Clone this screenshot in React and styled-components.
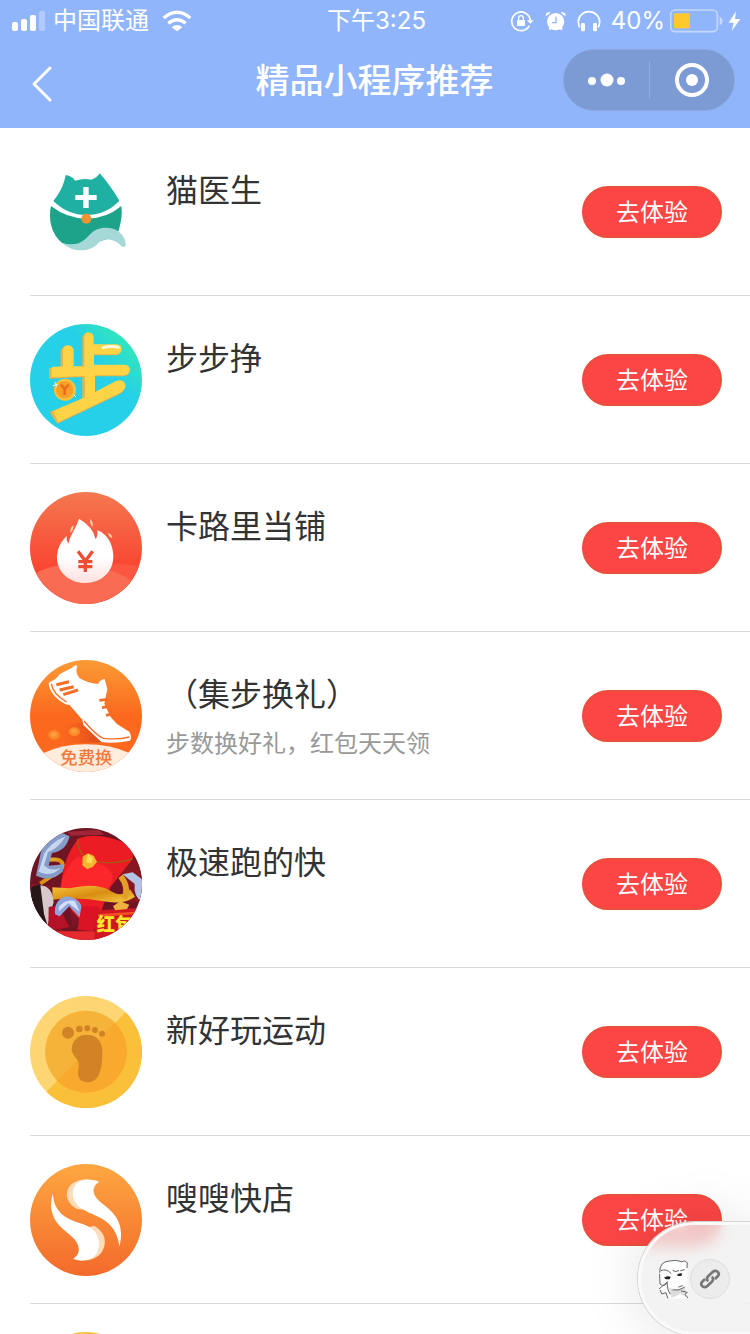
import styled, { createGlobalStyle } from "styled-components"

const GlobalStyle = createGlobalStyle`
  * {
    box-sizing: border-box;
  }
  body {
    margin: 0;
    background: #fff;
    color: #333;
    font-family: Inter, "Noto Sans CJK SC", sans-serif;
  }
  button {
    font-family: inherit;
    cursor: pointer;
  }
`

const SignalIcon = () => (
  <svg width="34" height="22" viewBox="36 27 102 66" fill="#fff" aria-hidden="true">
    <rect x="36" y="63" width="18" height="27" rx="6" />
    <rect x="63" y="54" width="18" height="36" rx="6" />
    <rect x="90" y="42" width="18" height="48" rx="6" />
    <rect x="117" y="30" width="18" height="60" rx="6" opacity="0.3" />
  </svg>
)

const WifiIcon = () => (
  <svg width="30" height="22" viewBox="486 27 90 66" aria-hidden="true">
    <g fill="none" stroke="#fff" strokeWidth="10">
      <path d="M491 51Q531 17 571 51" />
      <path d="M505 67Q531 45 557 67" />
    </g>
    <path d="M515 79Q531 65 547 79L531 91Z" fill="#fff" />
  </svg>
)

const RotationLockIcon = () => (
  <svg width="24" height="22" viewBox="405 27 72 66" aria-hidden="true">
    <path d="M463 74A28 28 0 1 1 466 58" fill="none" stroke="#fff" strokeWidth="5" />
    <path d="M456 58H476L466 68Z" fill="#fff" />
    <rect x="426" y="57" width="24" height="18" rx="2" fill="#fff" />
    <path d="M431 58V51A7 7 0 0 1 445 51V58" fill="none" stroke="#fff" strokeWidth="4" />
  </svg>
)

const AlarmIcon = () => (
  <svg width="21" height="22" viewBox="513 27 63 66" aria-hidden="true">
    <circle cx="545" cy="62" r="26" fill="#fff" />
    <path d="M516 46C513 36 521 31 530 35ZM574 46C577 36 569 31 560 35ZM524 82L531 77L535 83L527 88ZM566 82L559 77L555 83L563 88Z" fill="#fff" />
    <path d="M546 47V65H534" fill="none" stroke="#91b5fb" strokeWidth="4" />
  </svg>
)

const HeadphonesIcon = () => (
  <svg width="24" height="22" viewBox="606 27 72 66" aria-hidden="true">
    <path d="M614 79Q610 70 610 62A32 30 0 0 1 674 62Q674 70 670 79" fill="none" stroke="#fff" strokeWidth="5" />
    <rect x="618" y="66" width="12" height="25" rx="4" fill="#fff" />
    <rect x="654" y="66" width="12" height="25" rx="4" fill="#fff" />
  </svg>
)

const BatteryIcon = () => (
  <svg width="54" height="24" viewBox="885 26 162 72" aria-hidden="true">
    <rect x="887" y="29" width="140" height="65" rx="14" fill="none" stroke="#c4d7fd" strokeWidth="5" />
    <rect x="897" y="39" width="48" height="45" fill="#ffc92b" />
    <path d="M1034 49Q1043 53 1043 62T1034 74Z" fill="#c4d7fd" />
  </svg>
)

const BoltIcon = () => (
  <svg width="13" height="22" viewBox="1059 27 39 66" aria-hidden="true">
    <path d="M1083 31L1061 65H1076L1070 90L1096 54H1080Z" fill="#fff" />
  </svg>
)

const BackIcon = () => (
  <svg width="24" height="40" viewBox="0 0 24 40" aria-hidden="true">
    <path d="M20 4L4 20L20 36" fill="none" stroke="#fff" strokeWidth="3" strokeLinecap="round" strokeLinejoin="round" />
  </svg>
)

const MoreIcon = () => (
  <svg width="38" height="14" viewBox="0 0 38 14" fill="#fff" aria-hidden="true">
    <circle cx="5" cy="8" r="4" />
    <circle cx="20" cy="7" r="6.5" />
    <circle cx="34" cy="8" r="4" />
  </svg>
)

const CloseIcon = () => (
  <svg width="34" height="34" viewBox="0 0 34 34" aria-hidden="true">
    <circle cx="17" cy="17" r="15" fill="none" stroke="#fff" strokeWidth="4" />
    <circle cx="17" cy="17" r="6" fill="#fff" />
  </svg>
)

const CatLogo = () => (
  <Logo viewBox="30 18 336 336">
    <path d="M93 168Q142 206 200 206Q259 206 304 168Q309 197 296 242Q256 280 210 276Q165 296 126 279C94 252 84 207 93 168Z" fill="#1da389" />
    <path d="M126 278C166 290 188 277 206 257C226 233 254 229 280 236C305 244 319 270 317 286C314 294 305 292 301 285C282 265 249 263 233 281C214 303 164 313 126 278Z" fill="#a5d8d6" />
    <path d="M137 75Q157 78 165 92Q190 84 214 89Q231 84 239 70C261 95 280 121 298 152Q259 194 200 195Q143 195 100 153C119 130 132 104 137 75Z" fill="#1fb0a2" />
    <path d="M190 111H206V135H230V150H206V174H190V150H166V135H190Z" fill="#fff" />
    <circle cx="199" cy="206" r="15" fill="#f19330" />
  </Logo>
)

const StepsLogo = () => (
  <Logo viewBox="30 27 336 336">
    <defs>
      <linearGradient id="steps" x1="0.35" y1="0.65" x2="0.95" y2="0.1">
        <stop offset="0.5" stopColor="#25d0e8" />
        <stop offset="1" stopColor="#36edae" />
      </linearGradient>
    </defs>
    <circle cx="198" cy="195" r="168" fill="url(#steps)" />
    <g fill="#e9b248" transform="translate(-3 2)">
      <path d="M125 107Q128 91 144 91Q160 92 161 107V157H190V68Q191 52 206 52Q221 53 221 69V90H290Q305 91 305 104Q305 118 290 119H222V151H313Q330 152 330 166Q329 181 313 182H225V232L286 201Q306 192 315 207Q321 222 304 234L115 324L92 289L190 249V184L90 189V157L125 157Z" />
    </g>
    <path d="M129 107Q130 91 144 91Q160 92 161 107V154H193V68Q194 52 206 52Q221 53 221 69V88H290Q305 89 305 102Q305 117 290 118H222V149H313Q330 150 330 165Q329 180 313 181H225V231L286 199Q306 190 315 205Q321 220 304 232L115 322L99 288L195 247V183L95 187V156L129 154Z" fill="#fed447" />
    <path d="M249 98Q273 91 295 97" fill="none" stroke="#fff8dc" strokeWidth="9" strokeLinecap="round" />
    <circle cx="135" cy="224" r="33" fill="#fbc33d" />
    <circle cx="134" cy="224" r="26" fill="#fb9e25" />
    <path d="M123 209L134 222L146 209M134 222V240" fill="none" stroke="#e96e20" strokeWidth="8" />
    <path d="M104 200L110 216M98 212L114 208M162 240L168 246" stroke="#d5f8ff" strokeWidth="3" />
  </Logo>
)

const FlameLogo = () => (
  <Logo viewBox="30 27 336 336">
    <defs>
      <linearGradient id="flameBg" x1="0" y1="0" x2="0" y2="1">
        <stop offset="0" stopColor="#f47850" />
        <stop offset="0.7" stopColor="#fa4431" />
      </linearGradient>
      <linearGradient id="flame" x1="0" y1="0" x2="0" y2="1">
        <stop offset="0.6" stopColor="#fff" />
        <stop offset="1" stopColor="#ffe0df" />
      </linearGradient>
      <clipPath id="flameClip">
        <circle cx="198" cy="195" r="168" />
      </clipPath>
    </defs>
    <g clipPath="url(#flameClip)">
      <rect x="30" y="27" width="336" height="336" fill="url(#flameBg)" />
      <path d="M240 250Q312 234 380 255V370H240Z" fill="#fa5640" />
      <path d="M20 286Q110 226 220 250Q310 265 350 310V370H20Z" fill="#f96b52" />
    </g>
    <path d="M177 107Q198 119 211 135Q223 150 227 169Q234 159 232 142Q244 145 257 158C272 173 280 198 280 220C280 268 243 300 196 300C149 300 111 267 111 224C111 197 122 177 140 159Q138 171 145 182C153 151 169 134 177 107Z" fill="url(#flame)" />
    <path d="M160 127Q148 137 152 150Q162 139 160 127ZM211 108Q222 120 217 131Q208 122 211 108ZM264 151Q276 153 277 165Q267 163 264 151Z" fill="#ffd6ac" />
    <path d="M174 205L196 234L218 205M196 232V267M175 236H217M175 251H217" fill="none" stroke="#ed4d32" strokeWidth="10" />
  </Logo>
)

const ShoeLogo = () => (
  <Logo viewBox="30 27 336 336">
    <defs>
      <linearGradient id="shoeBg" x1="0" y1="0" x2="0" y2="1">
        <stop offset="0" stopColor="#fa9b35" />
        <stop offset="0.5" stopColor="#fc691e" />
      </linearGradient>
      <linearGradient id="shoeShade">
        <stop offset="0" stopColor="#f1571c" stopOpacity="0" />
        <stop offset="1" stopColor="#d94816" />
      </linearGradient>
      <clipPath id="shoeClip">
        <circle cx="198" cy="195" r="168" />
      </clipPath>
    </defs>
    <g clipPath="url(#shoeClip)">
      <rect x="30" y="27" width="336" height="336" fill="url(#shoeBg)" />
      <path d="M115 225L200 212L252 274L120 278Z" fill="url(#shoeShade)" />
      <path d="M65 308Q125 280 198 280Q270 280 335 308V370H65Z" fill="#ffecdd" />
    </g>
    <path d="M86 95Q88 132 137 160L149 162L187 206L190 222L245 274Q291 278 330 269Q337 257 328 242L291 219L272 198L253 158L262 114L254 84Q240 86 234 99Q202 96 178 81Q164 64 172 45Q166 39 155 51L121 68L106 84Z" fill="#fff" />
    <path d="M94 98Q99 130 140 153M192 210Q230 255 250 262Q294 267 328 258" fill="none" stroke="#f66e26" strokeWidth="4" />
    <path d="M109 101L147 92M119 117L161 107M130 131L174 117" fill="none" stroke="#f66e26" strokeWidth="9" />
    <path d="M238 148L263 145M246 170L271 166M258 193L280 188" fill="none" stroke="#f66e26" strokeWidth="8" />
    <ellipse cx="102" cy="252" rx="17" ry="14" fill="#fb8b29" />
    <ellipse cx="163" cy="242" rx="17" ry="13" fill="#fb8b29" />
    <ellipse cx="101" cy="250" rx="9" ry="7" fill="#ff9f3c" />
    <ellipse cx="162" cy="240" rx="9" ry="7" fill="#ff9f3c" />
    <text x="199" y="338" textAnchor="middle" fontSize="52" fontWeight="500" fill="#f17a3a">免费换</text>
  </Logo>
)

const RedPacketLogo = () => (
  <Logo viewBox="30 27 336 336">
    <defs>
      <linearGradient id="gold" x1="0" y1="0" x2="1" y2="1">
        <stop offset="0" stopColor="#f5c53c" />
        <stop offset="0.5" stopColor="#d98d13" />
        <stop offset="1" stopColor="#f7cd45" />
      </linearGradient>
      <clipPath id="packetClip">
        <circle cx="198" cy="195" r="168" />
      </clipPath>
    </defs>
    <g clipPath="url(#packetClip)">
      <rect x="30" y="27" width="336" height="336" fill="#6f1422" />
      <path d="M30 195L90 200L130 340L40 340ZM290 60L366 130V250L310 250Z" fill="#891722" />
      <path d="M143 38L236 32L253 47L151 50Z" fill="#9f2638" />
      <path d="M122 205Q132 104 178 57Q237 38 309 70Q346 89 337 121L271 205L220 337L161 289Z" fill="#ec1c25" />
      <path d="M122 205Q132 144 174 112L203 128Q261 129 278 170Q277 207 238 224Z" fill="#fc272a" />
      <path d="M172 61Q174 103 206 125Q280 139 337 120" fill="none" stroke="#a65b13" strokeWidth="4" />
      <path d="M188 113L204 103L221 110L231 128L218 144L201 151L187 139Z" fill="#f5b62c" />
      <path d="M204 105L218 117L215 133L199 130Z" fill="#ffdf5a" />
      <path d="M90 122Q128 118 128 139Q125 161 94 171L61 194" fill="none" stroke="url(#gold)" strokeWidth="12" />
      <path d="M48 170L62 103Q78 49 129 43L149 52Q138 97 96 102L86 140L130 136L129 157Q100 185 68 177Z" fill="#859bc8" />
      <path d="M56 158L72 105Q91 71 137 52Q113 91 84 99L72 139Q92 160 122 146Q95 176 56 158Z" fill="#c7d6ef" />
      <path d="M97 205L149 208Q226 190 269 214Q305 239 330 211L345 233Q311 259 246 246Q171 234 98 242Z" fill="url(#gold)" />
      <path d="M308 166L338 160L366 181V247Q340 234 344 195Z" fill="#b4c2e5" />
      <path d="M302 172Q329 206 312 239" fill="none" stroke="#e2a126" strokeWidth="17" />
      <path d="M34 205Q68 185 93 216L105 263L84 340L33 285Z" fill="#261719" />
      <path d="M61 199Q97 201 101 249L83 320L72 285Z" fill="#d7c8c9" />
      <path d="M86 264L114 258L148 324L85 336Z" fill="#b51127" />
      <path d="M105 286Q101 242 139 232Q181 237 187 270L183 299L148 262L119 292Z" fill="#8fa4db" />
      <path d="M116 264Q139 238 165 247L179 278L145 252L117 277Z" fill="#d3def7" />
      <path d="M147 267L181 303L158 326Z" fill="#7e1426" />
      <path d="M185 259L238 264L221 337L172 333Z" fill="#db1425" />
      <path d="M90 337H235L250 363H110Z" fill="#e52a30" />
      <path d="M230 274L366 266V363H222Z" fill="#d1171f" />
      <path d="M234 286L366 277V284L234 293Z" fill="#f45127" />
      <path d="M279 262L300 247L328 257L321 270L286 274Z" fill="#f0b13c" />
      <text x="230" y="336" fontSize="55" fontWeight="900" fill="#fbe82d">红包</text>
    </g>
  </Logo>
)

const FootLogo = () => (
  <Logo viewBox="30 27 336 336">
    <circle cx="198" cy="195" r="168" fill="#fcd672" />
    <path d="M317 76A168 168 0 1 1 79 314Z" fill="#fbc03a" />
    <circle cx="198" cy="194" r="123" fill="#f6b33a" />
    <path d="M285 107A123 123 0 0 1 111 281Z" fill="#f9aa2e" />
    <g fill="#d18325">
      <circle cx="144" cy="137" r="18" />
      <circle cx="178" cy="126" r="10" />
      <circle cx="202" cy="124" r="9" />
      <circle cx="225" cy="129" r="9" />
      <circle cx="246" cy="140" r="9" />
      <path d="M200 143C230 143 247 163 247 192C247 224 245 244 236 264C228 281 215 286 201 286C184 285 174 275 174 259C174 247 179 238 175 225C170 211 155 204 155 186C155 162 175 143 200 143Z" />
    </g>
  </Logo>
)

const FlashShopLogo = () => (
  <Logo viewBox="30 27 336 336">
    <defs>
      <linearGradient id="shop" x1="0" y1="0" x2="0" y2="1">
        <stop offset="0" stopColor="#fda741" />
        <stop offset="1" stopColor="#f36a2b" />
      </linearGradient>
    </defs>
    <circle cx="198" cy="195" r="168" fill="url(#shop)" />
    <path d="M237 80C208 67 165 70 147 96C131 121 145 149 172 162L200 165L214 99ZM160 311C189 322 229 318 247 289C264 258 253 229 222 212L196 220L184 290Z" fill="#ffdcb8" />
    <path d="M237 80C214 72 180 70 165 92C150 119 162 145 184 160C211 178 243 184 267 207C287 226 295 250 298 275C308 239 305 203 278 173C258 151 226 137 221 112C219 98 226 88 237 80Z" fill="#fff" />
    <path d="M99 115C86 154 95 187 120 214C143 237 174 253 176 280C178 295 170 304 160 312C183 320 217 318 231 294C246 265 234 232 210 217C186 203 148 199 125 177C107 160 99 139 99 115Z" fill="#fff" />
  </Logo>
)

const CoinLogo = () => (
  <Logo viewBox="0 0 112 112">
    <circle cx="56" cy="56" r="56" fill="#fbc03a" />
    <circle cx="56" cy="56" r="41" fill="#f9aa2e" />
  </Logo>
)

const MemeFace = () => (
  <svg width="32" height="40" viewBox="298 232 96 120" aria-hidden="true">
    <path d="M311 244Q333 231 362 239L380 235L386 244L385 351L335 351L322 326L302 324L303 280Z" fill="#fdfdfd" />
    <path d="M330 318Q358 328 379 315L384 347L365 336L339 349Z" fill="#ddd" />
    <g fill="none" stroke="#666" strokeWidth="3" strokeLinecap="round">
      <path d="M303 272Q302 240 332 238Q351 233 369 240Q380 234 386 243L385 258" />
      <path d="M303 278L304 307Q318 319 327 300M307 267Q323 259 337 275M343 267Q352 273 360 267M366 267L377 264" />
      <path d="M302 321L315 310L325 302L328 324L334 337M305 326L309 337L322 333L327 349M343 325Q361 329 377 317M360 316L371 312M368 328L386 332L379 338L387 348" />
    </g>
    <path d="M316 288Q326 282 336 285L333 293H322ZM354 280Q363 272 371 276L368 283H359Z" fill="#222" />
  </svg>
)

const LinkIcon = () => (
  <svg width="22" height="22" viewBox="0 0 24 24" fill="none" stroke="#777" strokeWidth="3" aria-hidden="true">
    <path d="M10 14.5C7.8 12.3 8.5 10.5 10 9L15.2 4.2C17 2.5 19.2 2.8 20.5 4.2C22 5.8 21.7 7.8 20.2 9.4L17.4 12" />
    <path d="M14 9.5C16.2 11.7 15.5 13.5 14 15L8.8 19.8C7 21.5 4.8 21.2 3.5 19.8C2 18.2 2.3 16.2 3.8 14.6L6.6 12" />
  </svg>
)

const apps = [
  { name: "猫医生", logo: CatLogo },
  { name: "步步挣", logo: StepsLogo },
  { name: "卡路里当铺", logo: FlameLogo },
  { name: "（集步换礼）", desc: "步数换好礼，红包天天领", logo: ShoeLogo },
  { name: "极速跑的快", logo: RedPacketLogo },
  { name: "新好玩运动", logo: FootLogo },
  { name: "嗖嗖快店", logo: FlashShopLogo },
]

const App = () => {
  return (
    <Screen>
      <GlobalStyle />
      <Header>
        <StatusBar>
          <StatusLeft>
            <SignalIcon />
            <span>中国联通</span>
            <WifiIcon />
          </StatusLeft>
          <span>下午3:25</span>
          <StatusRight>
            <StatusIcons>
              <RotationLockIcon />
              <AlarmIcon />
              <HeadphonesIcon />
            </StatusIcons>
            <Battery>
              <span>40%</span>
              <BatteryIcon />
            </Battery>
            <BoltIcon />
          </StatusRight>
        </StatusBar>
        <NavBar>
          <BackButton aria-label="返回">
            <BackIcon />
          </BackButton>
          <Title>精品小程序推荐</Title>
          <Capsule>
            <CapsuleButton aria-label="更多">
              <MoreIcon />
            </CapsuleButton>
            <Divider />
            <CapsuleButton aria-label="关闭">
              <CloseIcon />
            </CapsuleButton>
          </Capsule>
        </NavBar>
      </Header>
      <List>
        {apps.map(({ name, desc, logo: AppLogo }) => (
          <Row key={name}>
            <AppLogo />
            <Info>
              <Name>{name}</Name>
              {desc && <Desc>{desc}</Desc>}
            </Info>
            <TryButton>去体验</TryButton>
          </Row>
        ))}
        <Row>
          <CoinLogo />
        </Row>
      </List>
      <FloatingTab>
        <MemeFace />
        <LinkButton aria-label="链接">
          <LinkIcon />
        </LinkButton>
      </FloatingTab>
    </Screen>
  )
}

export default App

const Screen = styled.div`
  display: flex;
  flex-direction: column;
  height: 100vh;
`

const Header = styled.header`
  flex: none;
  background: #91b5fb;
  color: #fff;
`

const StatusBar = styled.div`
  display: grid;
  grid-template-columns: 1fr auto 1fr;
  align-items: center;
  height: 40px;
  padding: 0 9px 0 12px;
  font-size: 24px;
  line-height: 42px;
`

const StatusLeft = styled.div`
  display: flex;
  align-items: center;
  gap: 7px;

  span {
    margin-right: 6px;
  }
`

const StatusRight = styled.div`
  display: flex;
  align-items: center;
  justify-content: flex-end;
  gap: 4px;
`

const StatusIcons = styled.div`
  display: flex;
  gap: 11px;
  margin-right: 6px;
`

const Battery = styled.div`
  display: flex;
  align-items: center;
  gap: 5px;
`

const NavBar = styled.div`
  display: grid;
  grid-template-columns: 1fr auto 1fr;
  align-items: center;
  height: 88px;
  padding: 0 15px 8px 30px;
`

const BackButton = styled.button`
  display: flex;
  justify-self: start;
  padding: 8px 0 0;
  border: 0;
  background: none;
`

const Title = styled.h1`
  margin: 0;
  padding: 2px 16px 0 0;
  font-size: 34px;
  font-weight: 500;
  line-height: 48px;
`

const Capsule = styled.div`
  display: flex;
  align-items: center;
  justify-self: end;
  width: 172px;
  height: 62px;
  border: 1px solid #8aa6dc;
  border-radius: 31px;
  background: #7c9ad3;
`

const CapsuleButton = styled.button`
  display: flex;
  flex: 1;
  align-items: center;
  justify-content: center;
  padding: 0;
  border: 0;
  background: none;
`

const Divider = styled.span`
  width: 1px;
  height: 38px;
  background: #93ade0;
`

const List = styled.ul`
  flex: 1;
  min-height: 0;
  margin: 0;
  padding: 0 0 0 30px;
  list-style: none;
  overflow-y: auto;
  scrollbar-width: none;
`

const Row = styled.li`
  display: flex;
  align-items: center;
  height: 168px;
  padding-right: 28px;
  border-bottom: 1px solid #d9d9d9;
`

const Logo = styled.svg`
  flex: none;
  width: 112px;
  height: 112px;
`

const Info = styled.div`
  flex: 1;
  align-self: flex-start;
  padding: 39px 0 0 24px;
`

const Name = styled.h2`
  margin: 0;
  font-size: 32px;
  font-weight: 400;
  line-height: 48px;
`

const Desc = styled.p`
  margin: 7px 0 0;
  color: #999;
  font-size: 24px;
  line-height: 36px;
`

const TryButton = styled.button`
  width: 140px;
  height: 52px;
  padding: 2px 0 0;
  border: 2px solid #e8503c;
  border-radius: 26px;
  background: #fc4646;
  color: #fff;
  font-size: 24px;
  line-height: 46px;
`

const FloatingTab = styled.aside`
  position: fixed;
  right: 0;
  bottom: -1px;
  display: flex;
  align-items: center;
  width: 112px;
  height: 113px;
  padding-left: 17px;
  border: 3px solid #fafafa;
  border-right: 0;
  border-radius: 57px 0 0 57px;
  background: rgba(239, 239, 239, 0.75);
  box-shadow: 0 0 0 1px #d4d4d4, 0 0 60px rgba(0, 0, 0, 0.12);
  backdrop-filter: blur(8px);
`

const LinkButton = styled.button`
  display: flex;
  align-items: center;
  justify-content: center;
  width: 40px;
  height: 40px;
  padding: 0;
  border: 1px solid #ddd;
  border-radius: 50%;
  background: #ececec;
`
